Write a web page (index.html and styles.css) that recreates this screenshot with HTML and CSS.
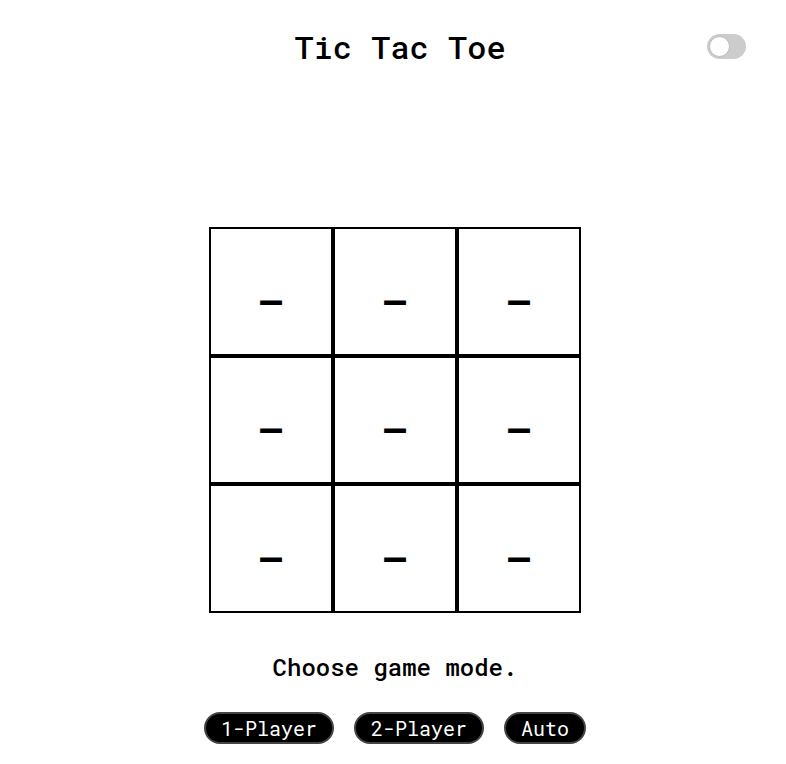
FILE: index.html
```html
<!DOCTYPE html>
<html lang="en">
<head>
<meta charset="utf-8">
<title>Tic Tac Toe</title>
<link rel="stylesheet" href="styles.css">
</head>
<body>
<header class="header">
  <h1 class="title">Tic Tac Toe</h1>
  <label class="toggle"><span class="knob"></span></label>
</header>
<main class="main">
  <div class="board">
    <div class="cell">—</div>
    <div class="cell">—</div>
    <div class="cell">—</div>
    <div class="cell">—</div>
    <div class="cell">—</div>
    <div class="cell">—</div>
    <div class="cell">—</div>
    <div class="cell">—</div>
    <div class="cell">—</div>
  </div>
  <p class="status">Choose game mode.</p>
  <div class="modes">
    <button class="mode">1-Player</button>
    <button class="mode">2-Player</button>
    <button class="mode">Auto</button>
  </div>
</main>
</body>
</html>
```
FILE: styles.css
```css
html, body {
  margin: 0;
  padding: 0;
  background: #fff;
  color: #000;
  font-family: "Roboto Mono", "DejaVu Sans Mono", "Liberation Mono", monospace;
}
.header {
  position: relative;
  height: 96px;
  display: flex;
  justify-content: center;
  align-items: flex-start;
}
.title {
  margin: 27px 0 0 14px;
  font-size: 32px;
  font-weight: 500;
  line-height: 40px;
}
.toggle {
  position: absolute;
  left: 707px;
  top: 34px;
  width: 39px;
  height: 25px;
  border-radius: 13px;
  background: #ccc;
}
.knob {
  position: absolute;
  left: 2px;
  top: 2px;
  width: 19px;
  height: 19px;
  border-radius: 50%;
  background: #fff;
  border: 1px solid #bbb;
}
.main {
  display: flex;
  flex-direction: column;
  align-items: center;
  padding-top: 131px;
}
.board {
  display: grid;
  grid-template-columns: repeat(3, 124px);
  grid-template-rows: repeat(3, 128.67px);
  margin-left: 4px;
}
.cell {
  box-sizing: border-box;
  border: 2px solid #000;
  display: flex;
  align-items: center;
  justify-content: center;
  font-size: 40px;
  font-weight: 700;
  padding-top: 20px;
}
.status {
  margin: 38px 0 0 4px;
  font-size: 24px;
  font-weight: 500;
  line-height: 32px;
}
.modes {
  display: flex;
  gap: 20px;
  margin-top: 29px;
  margin-left: 4px;
}
.mode {
  font-family: inherit;
  font-size: 20px;
  line-height: 28px;
  padding: 0 15px;
  color: #fff;
  background: #000;
  border: 2px solid #444;
  border-radius: 16px;
}
```
